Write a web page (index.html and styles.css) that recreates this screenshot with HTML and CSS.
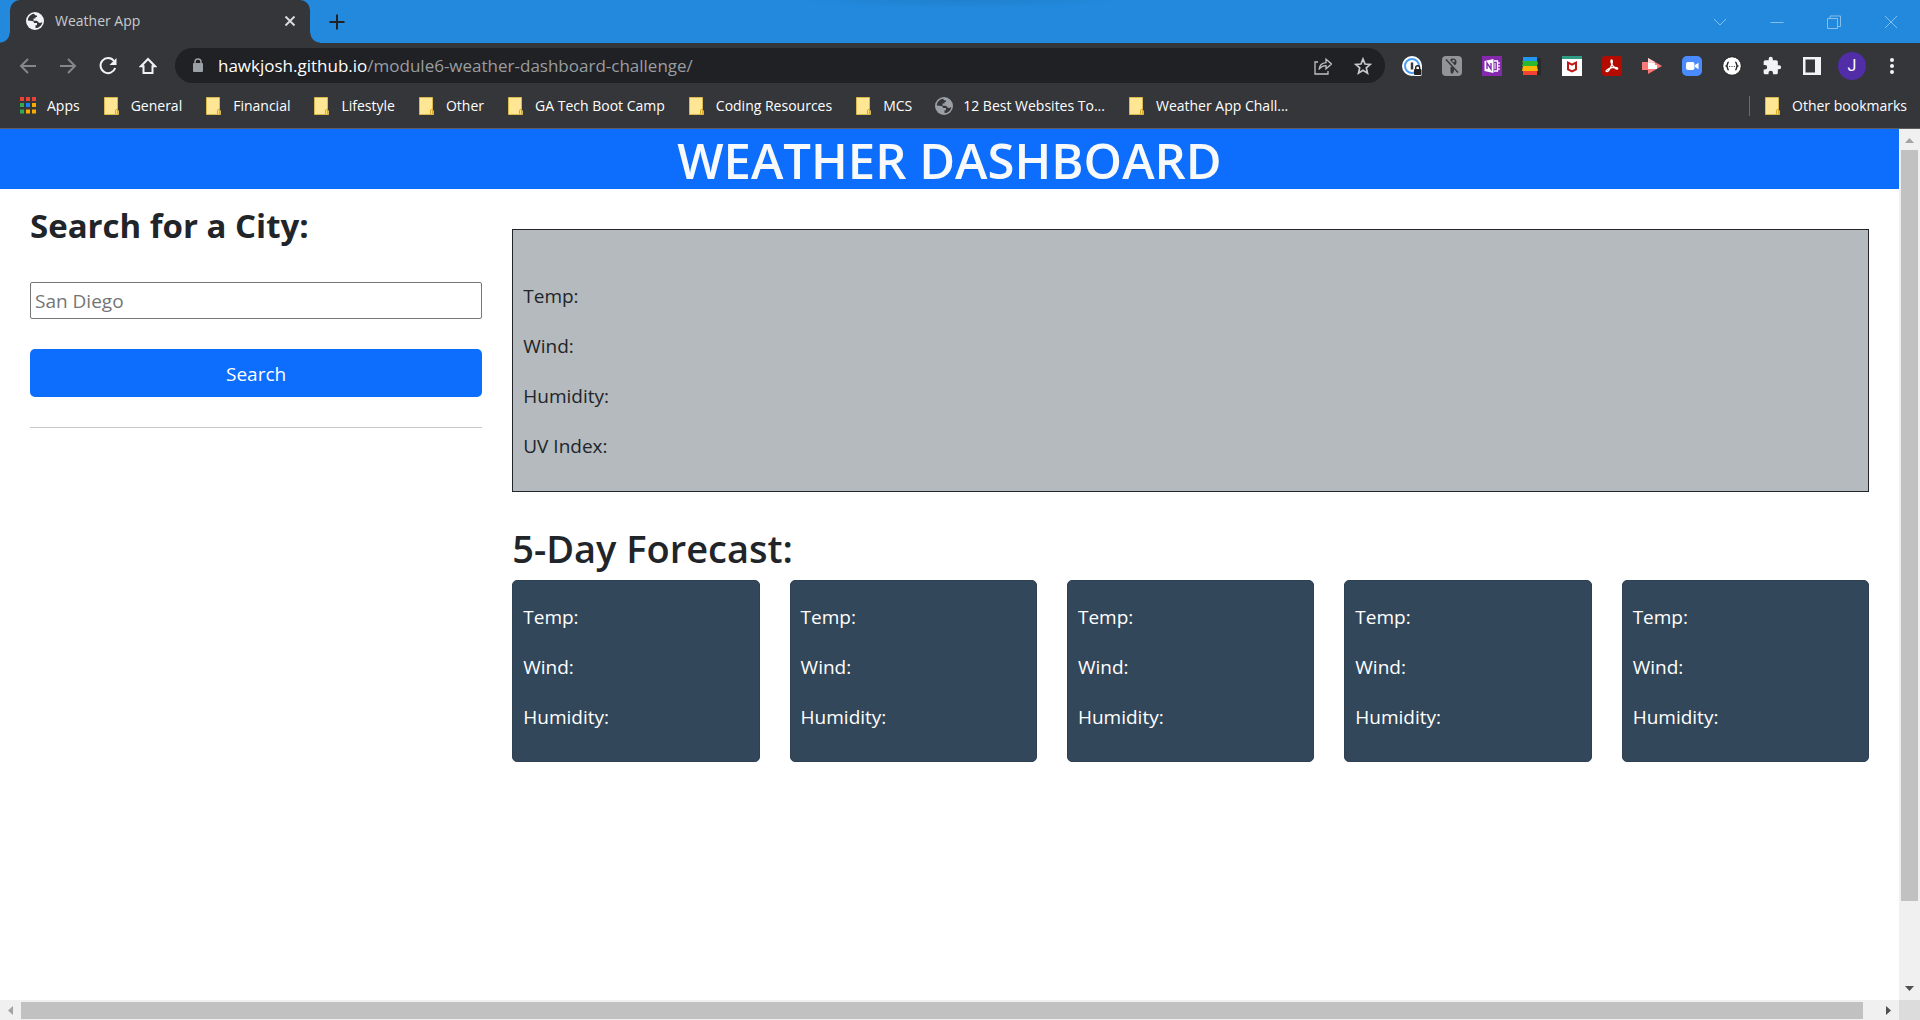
FILE: index.html
```html
<!DOCTYPE html>
<html lang="en">
<head>
<meta charset="utf-8">
<title>Weather App</title>
<link rel="stylesheet" href="styles.css">
</head>
<body>
<svg class="defs" aria-hidden="true">
  <symbol id="folder" viewBox="0 0 18 18"><path d="M1.500 .5h13v12.500l1 1v3.500h-14z" fill="#ffe694" stroke="#d9b84c"/><path d="M12.500 17v-4l2-1v5" fill="#ffe182" stroke="#d9a928"/></symbol>
  <symbol id="globe" viewBox="0 0 18 18"><circle cx="9" cy="9" r="9" fill="currentColor"/><path d="M8 1.800C4.500 2.500 2 5 1.800 8.500c1.500.3 3 .5 4.200.5 1.500 0 2 .8 2 2h3v2.200H9.500v2.900c3.500 0 6.400-2.600 6.800-6.100-1.500 1-2.800 1.200-3.600.5-.8-.6-1-1.500-2.200-1.700H7.500V6.500h2V5H11V3.500C10 3.500 8.500 3.200 8 1.800z" fill="#35363a"/></symbol>
</svg>
<div class="browser">
  <div class="tabstrip">
    <div class="tab">
      <svg class="i18 light" ><use href="#globe"/></svg>
      <span class="tab-title">Weather App</span>
      <button class="plain" aria-label="Close tab"><svg class="i12" viewBox="0 0 12 12"><path d="M1.500 1.500l9 9m0-9l-9 9" stroke="#dadce0" stroke-width="1.900"/></svg></button>
    </div>
    <button class="plain newtab" aria-label="New tab"><svg class="i16" viewBox="0 0 16 16"><path d="M8 .5v15M.5 8h15" stroke="#202124" stroke-width="2"/></svg></button>
    <div class="winbtns">
      <button class="plain" aria-label="Search tabs"><svg class="i14" viewBox="0 0 14 14"><path d="M1 4l6 6 6-6"/></svg></button>
      <button class="plain" aria-label="Minimize"><svg class="i14" viewBox="0 0 14 14"><path d="M.5 7.500h13"/></svg></button>
      <button class="plain" aria-label="Restore"><svg class="i14" viewBox="0 0 14 14"><path d="M.5 3.500h10v10H.5zM3 3.500V1h10.500v10.500h-3"/></svg></button>
      <button class="plain" aria-label="Close"><svg class="i14" viewBox="0 0 14 14"><path d="M1 1l12 12m0-12L1 13"/></svg></button>
    </div>
  </div>

  <div class="toolbar">
    <div class="tools">
      <button class="plain" aria-label="Back"><svg class="i18" viewBox="0 0 18 18"><path d="M17 9H2m7-7L2 9l7 7" fill="none" stroke="#85868a" stroke-width="2"/></svg></button>
      <button class="plain" aria-label="Forward"><svg class="i18" viewBox="0 0 18 18"><path d="M1 9h15M9 2l7 7-7 7" fill="none" stroke="#85868a" stroke-width="2"/></svg></button>
      <button class="plain" aria-label="Reload"><svg class="i18" viewBox="0 0 18 18"><path d="M15 4a7.500 7.500 0 1 0 1.200 7" fill="none" stroke="#f1f3f4" stroke-width="2"/><path d="M17.500 1v7h-7z" fill="#f1f3f4"/></svg></button>
      <button class="plain" aria-label="Home"><svg class="i18" viewBox="0 0 18 18"><path d="M9 2L2 9.200h2.500V16h9V9.200H16z" fill="none" stroke="#f1f3f4" stroke-width="2"/></svg></button>
    </div>
    <div class="omnibox">
      <svg class="lock" viewBox="0 0 12 16"><rect x="1" y="5" width="10" height="9" rx="1" fill="#9aa0a6"/><path d="M3 6V4a3 3 0 0 1 6 0v2" fill="none" stroke="#9aa0a6" stroke-width="1.500"/></svg>
      <div class="url"><b>hawkjosh.github.io</b>/module6-weather-dashboard-challenge/</div>
      <button class="plain" aria-label="Share"><svg class="i18" viewBox="0 0 18 18"><path d="M4 5H1v12h13v-3M5 12.500c.5-4 3-6.500 7-6.800V2.200L17.500 7 12 11.800V8.700c-3 0-5.200 1.200-7 3.800z" fill="none" stroke="#bdc1c6" stroke-width="1.300"/></svg></button>
      <button class="plain" aria-label="Bookmark"><svg class="i18" viewBox="0 0 18 18"><path d="M9 2l2 5 5.300.4-4 3.500 1.200 5.200L9 13.300l-4.500 2.800 1.200-5.200-4-3.500L7 7z" fill="none" stroke="#c8cacd" stroke-width="1.700"/></svg></button>
    </div>
    <div class="tools">
      <button class="plain" aria-label="Password manager"><svg class="i20" viewBox="0 0 20 20"><circle cx="10" cy="10" r="10" fill="#fff"/><rect x="11" y="10" width="9" height="10" rx="2" fill="#fff"/><circle cx="10" cy="10" r="7" fill="none" stroke="#4a9ff5" stroke-width="2"/><path d="M10 6.500v7" stroke="#35363a" stroke-width="2.500"/><path d="M12 11h7v8h-7z" fill="#fff"/><rect x="12" y="13" width="7.500" height="6" rx="1" fill="#222"/><path d="M13.700 13v-1.300a2 2 0 0 1 4 0V13" fill="none" stroke="#222" stroke-width="1.400"/></svg></button>
      <button class="plain" aria-label="Web developer tool"><svg class="i20" viewBox="0 0 20 20"><rect width="20" height="20" rx="4" fill="#939496"/><circle cx="11" cy="6" r="3.500" fill="#37383b"/><circle cx="11.500" cy="5" r="1.200" fill="#939496"/><path d="M8.500 11h3.500v4l-1.500 3-2-1.500z" fill="#37383b"/><path d="M5 3l12 13" stroke="#939496" stroke-width="3"/><path d="M4 3.500l12 13" stroke="#37383b" stroke-width="1.500"/></svg></button>
      <button class="plain" aria-label="OneNote"><svg class="i20" viewBox="0 0 20 20"><path fill="#8429ae" d="M0 0h20v20H0z"/><path fill="#fff" d="M2.500 5l9-2v14l-9-2z"/><path d="M12 5h3.500v10H12" fill="none" stroke="#fff" stroke-width="1.300"/><path d="M12 8h2m-2 2h2m-2 2h2M17 6v2m0 1v2m0 1v2" stroke="#fff" stroke-width="1.200"/><path d="M5 13V7l4 6V7" fill="none" stroke="#8429ae" stroke-width="1.400"/></svg></button>
      <button class="plain" aria-label="Stack"><svg class="i20" viewBox="0 0 20 20"><path fill="#292a2d" d="M15 2h4v17h-4z"/><path fill="#2196f3" d="M1 1h14v5H1z"/><path fill="#f44336" d="M1 14h14v5H1z"/><path fill="#fbb604" d="M1 10h14l1 5H0z"/><path fill="#2eb82e" d="M0 5h15l1 2-1 3H0l1-3z"/></svg></button>
      <button class="plain" aria-label="McAfee"><svg class="i20" viewBox="0 0 20 20"><path fill="#fff" d="M0 0h20v20H0z"/><path fill="#2f9c86" d="M0 0h20v3H0z"/><path fill="#c01818" d="M5 5l5 2.500L15 5v9l-5 2.500L5 14zm2 3.200v4.600l3 1.500 3-1.500V8.200l-3 1.500z"/></svg></button>
      <button class="plain" aria-label="Acrobat"><svg class="i20" viewBox="0 0 20 20"><rect width="20" height="20" rx="3" fill="#b30b00"/><path d="M9.500 4c1.500 0 .8 3.500-.5 6.500S5.500 16 4.300 15.500 6 12.500 10 11.700s6.500.3 5.500 1.300S11.500 11 10 8.500 8.800 4 9.500 4z" fill="none" stroke="#fff" stroke-width="1.300"/></svg></button>
      <button class="plain" aria-label="Recorder"><svg class="i20" viewBox="0 0 20 20"><path fill="#f77" d="M0 6h6V2l14 8-14 8v-4H0z"/><path fill="#ffd3d3" d="M6 2l7 4-7 3z"/><path fill="#fff" d="M6 7h7v2h2v4H6z"/></svg></button>
      <button class="plain" aria-label="Zoom"><svg class="i20" viewBox="0 0 20 20"><rect width="20" height="20" rx="5" fill="#4a8cff"/><rect x="4" y="6" width="8.500" height="8" rx="2" fill="#fff"/><path fill="#fff" d="M13 9l3.500-2.300v6.600L13 11z"/></svg></button>
      <button class="plain" aria-label="JSON viewer"><svg class="i20" viewBox="0 0 20 20"><circle cx="10" cy="10" r="9.300" fill="#fff" stroke="#1c1c1c"/><path d="M6.800 6.200c-2 0-.6 3-2.300 3.800 1.700.8.300 3.800 2.300 3.800m6.400-7.600c2 0 .6 3 2.300 3.800-1.700.8-.3 3.800-2.300 3.800" fill="none" stroke="#222" stroke-width="1.400"/><path d="M7 10.500h6" stroke="#555" stroke-dasharray="1.200 1.200"/></svg></button>
      <button class="plain" aria-label="Extensions"><svg class="i20" viewBox="0 0 24 24"><path fill="#f1f3f4" d="M20.500 11H19V7c0-1.100-.9-2-2-2h-4V3.500a2.500 2.500 0 0 0-5 0V5H4c-1.100 0-2 .9-2 2v3.800h1.500a2.700 2.700 0 0 1 0 5.400H2V20c0 1.100.9 2 2 2h3.800v-1.500a2.700 2.700 0 0 1 5.400 0V22H17c1.100 0 2-.9 2-2v-4h1.500a2.500 2.500 0 0 0 0-5z"/></svg></button>
      <button class="plain" aria-label="Side panel"><svg class="i18" viewBox="0 0 18 18"><path fill="#f1f3f4" d="M0 0h18v18H0z"/><path fill="#35363a" d="M2.500 2.500H12v13H2.500z"/></svg></button>
      <button class="plain" aria-label="Profile"><span class="avatar">J</span></button>
      <button class="plain" aria-label="Menu"><svg class="i18" viewBox="0 0 18 18"><g fill="#f1f3f4"><circle cx="9" cy="3" r="2"/><circle cx="9" cy="9" r="2"/><circle cx="9" cy="15" r="2"/></g></svg></button>
    </div>
  </div>

  <nav class="bookmarks">
    <a href="#"><svg class="i18" viewBox="0 0 18 18"><path fill="#ea4335" d="M1 0h4v4H1zM7 0h4v4H7zM13 0h4v4h-4z"/><path fill="#34a853" d="M1 6h4v4H1zM1 12.500h4v4H1z"/><path fill="#1a82f0" d="M7 6h4v4H7z"/><path fill="#fbab00" d="M13 6h4v4h-4zM7 12.500h4v4H7zM13 12.500h4v4h-4z"/></svg>Apps</a>
    <a href="#"><svg class="i18"><use href="#folder"/></svg>General</a>
    <a href="#"><svg class="i18"><use href="#folder"/></svg>Financial</a>
    <a href="#"><svg class="i18"><use href="#folder"/></svg>Lifestyle</a>
    <a href="#"><svg class="i18"><use href="#folder"/></svg>Other</a>
    <a href="#"><svg class="i18"><use href="#folder"/></svg>GA Tech Boot Camp</a>
    <a href="#"><svg class="i18"><use href="#folder"/></svg>Coding Resources</a>
    <a href="#"><svg class="i18"><use href="#folder"/></svg>MCS</a>
    <a href="#"><svg class="i18 grey"><use href="#globe"/></svg>12 Best Websites To...</a>
    <a href="#"><svg class="i18"><use href="#folder"/></svg>Weather App Chall...</a>
    <a href="#" class="others"><svg class="i18"><use href="#folder"/></svg>Other bookmarks</a>
  </nav>

  <div class="viewport">
    <div class="page">
      <header class="banner"><h1>WEATHER DASHBOARD</h1></header>
      <main class="content">
        <form class="search">
          <label for="city">Search for a City:</label>
          <input id="city" type="text" placeholder="San Diego">
          <button type="button">Search</button>
          <hr>
        </form>
        <div class="results">
          <section class="current">
            <p>Temp:</p><p>Wind:</p><p>Humidity:</p><p>UV Index:</p>
          </section>
          <h2>5-Day Forecast:</h2>
          <div class="days">
            <section class="day"><p>Temp:</p><p>Wind:</p><p>Humidity:</p></section>
            <section class="day"><p>Temp:</p><p>Wind:</p><p>Humidity:</p></section>
            <section class="day"><p>Temp:</p><p>Wind:</p><p>Humidity:</p></section>
            <section class="day"><p>Temp:</p><p>Wind:</p><p>Humidity:</p></section>
            <section class="day"><p>Temp:</p><p>Wind:</p><p>Humidity:</p></section>
          </div>
        </div>
      </main>
    </div>
    <div class="vbar">
      <svg class="arrow" viewBox="0 0 21 21"><path d="M6 14h9l-4.500-5z" fill="#a3a3a3"/></svg>
      <div class="track"><div class="thumb"></div></div>
      <svg class="arrow" viewBox="0 0 21 21"><path d="M6 7h9l-4.500 5z" fill="#505050"/></svg>
    </div>
    <div class="hbar">
      <svg class="arrow" viewBox="0 0 21 21"><path d="M13 6v9l-5-4.500z" fill="#a3a3a3"/></svg>
      <div class="track"><div class="thumb"></div></div>
      <svg class="arrow" viewBox="0 0 21 21"><path d="M8 6v9l5-4.500z" fill="#505050"/></svg>
    </div>
    <div class="corner"></div>
  </div>
</div>
</body>
</html>
```

FILE: styles.css
```css
* { box-sizing: border-box; }
body { margin: 0; font-family: "Open Sans", "Noto Sans", sans-serif; font-size: 19px; color: #212529; }
h1, h2, p { margin: 0; }
svg { display: block; flex: none; }
.defs { display: none; }
.i12 { width: 12px; height: 12px; }
.i14 { width: 14px; height: 14px; }
.i16 { width: 16px; height: 16px; }
.i18 { width: 18px; height: 18px; }
.i20 { width: 20px; height: 20px; }
.light { color: #f1f3f4; }
.grey { color: #9aa0a6; }
.plain { display: flex; align-items: center; justify-content: center; padding: 0; border: 0; background: none; font: inherit; color: inherit; }

.browser { display: flex; flex-direction: column; height: 100vh; background: #35363a; }

/* tab strip */
.tabstrip { display: flex; align-items: center; height: 43px; padding: 0 1px 0 10px; background: radial-gradient(ellipse 170px 8px at 50% 0, #2080cd, #2289dc) #2289dc; }
.tab { position: relative; display: flex; align-items: center; gap: 11px; width: 300px; height: 43px; padding: 0 14px 2px 16px; border-radius: 10px 10px 0 0; background: #35363a; font-size: 14px; color: #c8cacd; }
.tab::before, .tab::after { content: ""; position: absolute; bottom: 0; width: 10px; height: 10px; }
.tab::before { left: -10px; background: radial-gradient(circle at 0 0, #2289dc 9px, #35363a 10px); }
.tab::after { right: -10px; background: radial-gradient(circle at 100% 0, #2289dc 9px, #35363a 10px); }
.tab-title { flex: 1; }
.newtab { margin-left: 19px; }
.winbtns { display: flex; margin-left: auto; height: 37px; }
.winbtns .plain { width: 57px; }
.winbtns path { fill: none; stroke: #86bfec; }

/* toolbar */
.toolbar { display: flex; align-items: center; gap: 7px; height: 45px; padding: 0 8px; }
.tools { display: flex; }
.tools .plain { width: 40px; height: 40px; }
.omnibox { flex: 1; display: flex; align-items: center; height: 35px; padding: 0 2px 0 17px; border-radius: 18px; background: #202124; }
.omnibox .plain { width: 40px; height: 35px; }
.lock { width: 12px; height: 16px; }
.url { flex: 1; padding-left: 14px; font-size: 17px; color: #9a9da1; }
.url b { font-weight: 400; color: #fff; }
.avatar { display: flex; align-items: center; justify-content: center; width: 28px; height: 28px; border-radius: 50%; background: #512da8; color: #fff; font: 16px Roboto, sans-serif; }

/* bookmarks bar */
.bookmarks { display: flex; align-items: center; gap: 23px; height: 41px; padding: 0 13px 5px 19px; border-bottom: 1px solid #5d5e61; font-size: 14px; }
.bookmarks a { display: flex; align-items: center; gap: 10px; color: #fff; text-decoration: none; white-space: nowrap; }
.bookmarks .others { height: 20px; margin-left: auto; padding-left: 14px; border-left: 1px solid #68696d; }

/* page area with scrollbars */
.viewport { flex: 1; display: grid; grid-template: minmax(0, 1fr) 20px / minmax(0, 1fr) 21px; min-height: 0; }
.page { overflow: hidden; background: #fff; }
.vbar, .hbar { display: flex; background: #f0f0f0; }
.vbar { flex-direction: column; }
.arrow { width: 21px; height: 21px; }
.track { flex: 1; }
.thumb { background: #c1c1c1; }
.vbar .thumb { height: 90.6%; margin: 0 2px; }
.hbar .track { display: flex; padding: 2px 0 1px; }
.hbar .thumb { width: 99.2%; }
.corner { background: #dcdcdc; }

.banner { background: #0d6efd; color: #f8f9fa; text-align: center; }
.banner h1 { padding-top: 2px; font-size: 49px; line-height: 58px; font-weight: 600; }
.content { display: grid; grid-template-columns: minmax(0, 1fr) minmax(0, 3fr); gap: 30px; padding: 0 30px; }
.search { display: flex; flex-direction: column; padding-top: 13px; }
.search label { font-size: 33px; line-height: 48px; font-weight: 700; }
.search input { height: 37px; margin-top: 32px; padding: 0 4px; border: 1px solid #767676; border-radius: 2px; font: inherit; }
.search input::placeholder { color: #757575; }
.search button { height: 48px; margin-top: 30px; padding-top: 2px; border: 0; border-radius: 5px; background: #0d6efd; color: #fff; font: inherit; }
.search hr { width: 100%; height: 1px; margin: 30px 0 0; border: 0; background: #c8c9ca; }
.results { padding-top: 40px; }
.current { display: flex; flex-direction: column; gap: 20px; padding: 51px 10px 30px; border: 1px solid #212529; background: #b4babe; }
.current p, .day p { line-height: 30px; }
.results h2 { margin: 32px 0 8px; font-size: 38px; line-height: 48px; font-weight: 600; }
.days { display: grid; grid-template-columns: repeat(5, minmax(0, 1fr)); gap: 30px; }
.day { display: flex; flex-direction: column; gap: 20px; padding: 21px 10px 29px; border: 1px solid #2e4052; border-radius: 5px; background: #33475b; color: #fff; }
```
